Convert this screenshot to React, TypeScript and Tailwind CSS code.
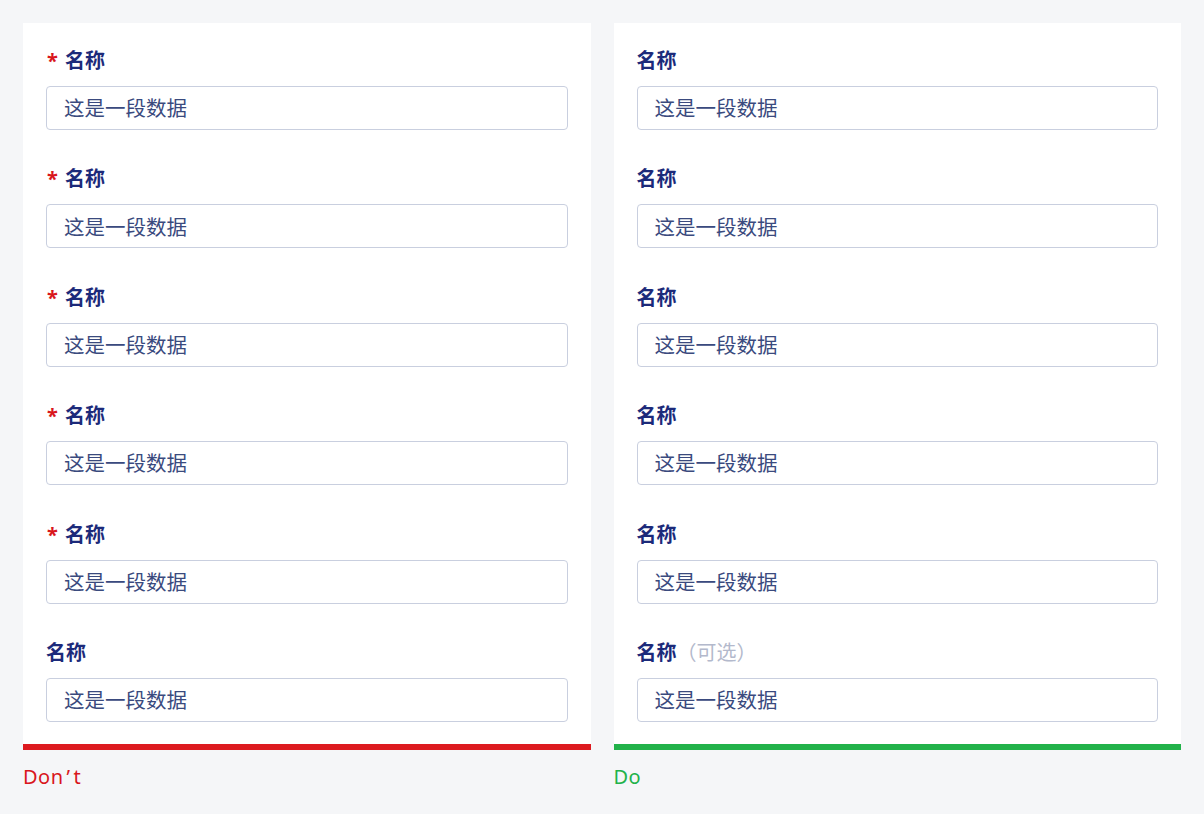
import React from "react";

const FONT = { fontFamily: '"Noto Sans", "Noto Sans CJK SC", sans-serif' };

type FieldProps = { required?: boolean; optional?: boolean };

function Field({ required, optional }: FieldProps) {
  return (
    <div className="flex flex-col">
      <div className="flex items-center h-[26px] text-[20px] leading-[26px]">
        {required && (
          <span className="text-[#d9161c] font-bold w-[19px] pl-[1px] text-[20px]">*</span>
        )}
        <span className="font-bold text-[#1c2a7a]">名称</span>
        {optional && <span className="text-[#b3b9cc]">（可选）</span>}
      </div>
      <div className="mt-[12px] h-[44px] rounded-[4px] border border-[#c9cfdf] bg-white flex items-center pl-[17px] pt-[1px] text-[20.5px] text-[#3a4a7e]">
        这是一段数据
      </div>
    </div>
  );
}

function Card({ kind }: { kind: "dont" | "do" }) {
  const dont = kind === "dont";
  const rows = [0, 1, 2, 3, 4];
  return (
    <div className="flex-1 flex flex-col">
      <div className="bg-white px-[23px] pt-[25px] pb-[22px] flex flex-col gap-[36.4px]">
        {rows.map((i) => (
          <Field key={i} required={dont} />
        ))}
        <Field optional={!dont} />
      </div>
      <div className={dont ? "h-[6px] bg-[#dd1a1f]" : "h-[6px] bg-[#22b24a]"} />
      <div
        className={
          "mt-[14px] text-[20px] leading-[26px] tracking-[0.5px] " +
          (dont ? "text-[#d9161c]" : "text-[#22b24a]")
        }
      >
        {dont ? (
          <>
            Don<span className="px-[3px]">’</span>t
          </>
        ) : (
          "Do"
        )}
      </div>
    </div>
  );
}

export default function App() {
  return (
    <div className="w-[1204px] h-[814px] bg-[#f5f6f8] p-[23px] flex gap-[23px]" style={FONT}>
      <Card kind="dont" />
      <Card kind="do" />
    </div>
  );
}
